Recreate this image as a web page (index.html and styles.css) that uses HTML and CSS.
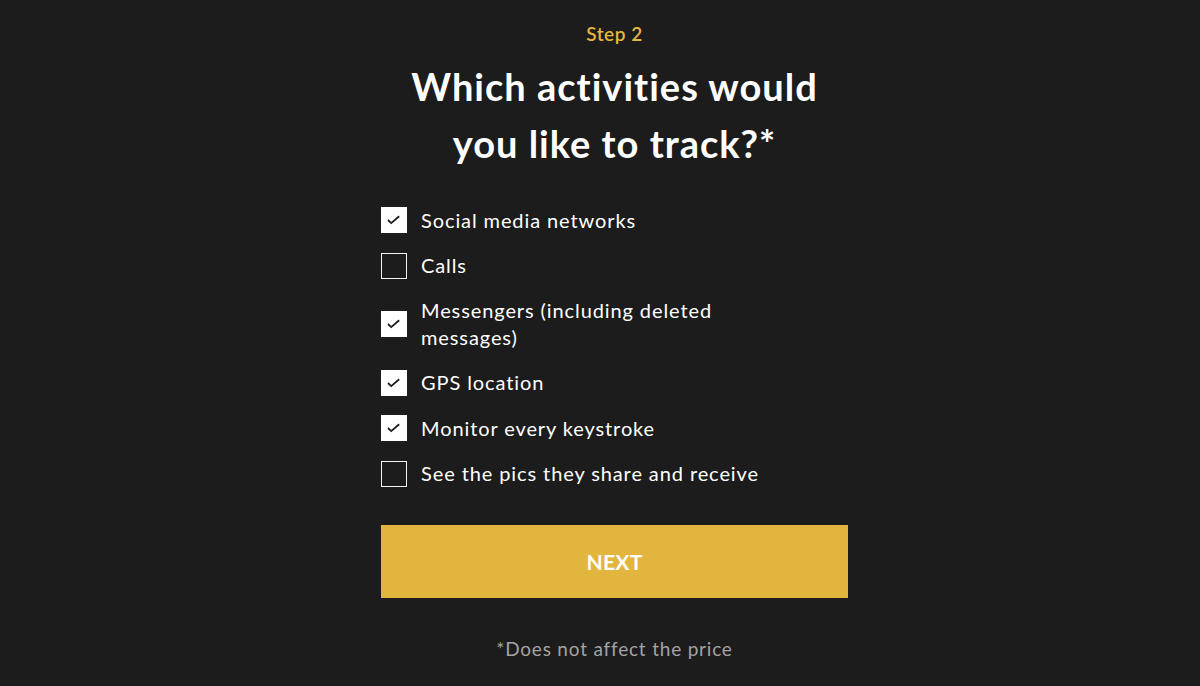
FILE: index.html
```html
<!DOCTYPE html>
<html>
<head>
<meta charset="utf-8">
<link rel="stylesheet" href="styles.css">
</head>
<body>
<main class="wrap">
  <div class="step">Step 2</div>
  <h1 class="title">Which activities would<br>you like to track?*</h1>
  <ul class="list">
    <li class="item"><span class="box checked"><svg viewBox="0 0 23 23"><path d="M6 12l3.2 3.1 8-6.8" fill="none" stroke="#1c1c1c" stroke-width="1.8"/></svg></span><span class="label">Social media networks</span></li>
    <li class="item"><span class="box"></span><span class="label">Calls</span></li>
    <li class="item"><span class="box checked"><svg viewBox="0 0 23 23"><path d="M6 12l3.2 3.1 8-6.8" fill="none" stroke="#1c1c1c" stroke-width="1.8"/></svg></span><span class="label">Messengers (including deleted messages)</span></li>
    <li class="item"><span class="box checked"><svg viewBox="0 0 23 23"><path d="M6 12l3.2 3.1 8-6.8" fill="none" stroke="#1c1c1c" stroke-width="1.8"/></svg></span><span class="label">GPS location</span></li>
    <li class="item"><span class="box checked"><svg viewBox="0 0 23 23"><path d="M6 12l3.2 3.1 8-6.8" fill="none" stroke="#1c1c1c" stroke-width="1.8"/></svg></span><span class="label">Monitor every keystroke</span></li>
    <li class="item"><span class="box"></span><span class="label">See the pics they share and receive</span></li>
  </ul>
  <button class="next">NEXT</button>
  <p class="note">*Does not affect the price</p>
</main>
</body>
</html>
```

FILE: styles.css
```css
html, body {
  margin: 0;
  padding: 0;
  background: #1c1c1c;
  height: 100%;
}
body {
  font-family: Lato, "Open Sans", sans-serif;
  color: #fff;
}
.wrap {
  width: 467px;
  margin: 0 0 0 calc(50% - 219px);
  display: flex;
  flex-direction: column;
  align-items: stretch;
  padding-top: 22px;
}
.step {
  text-align: center;
  color: #e3b63f;
  font-size: 19px;
  font-weight: 600;
  line-height: 24px;
  letter-spacing: 0.5px;
}
.title {
  margin: 12px -60px 0;
  text-align: center;
  font-size: 38px;
  font-weight: 700;
  line-height: 57px;
  letter-spacing: 1px;
}
.list {
  list-style: none;
  margin: 34px 0 0;
  padding: 0;
  display: flex;
  flex-direction: column;
  gap: 17.5px;
}
.item {
  display: flex;
  align-items: center;
  gap: 14px;
  min-height: 28px;
}
.box {
  flex: none;
  width: 26px;
  height: 26px;
  box-sizing: border-box;
  border: 1.5px solid #f2f2f2;
  display: flex;
}
.box.checked {
  background: #fff;
  border-color: #fff;
}
.box svg {
  width: 23px;
  height: 23px;
}
.label {
  font-size: 20px;
  line-height: 27px;
  max-width: 350px;
  letter-spacing: 0.9px;
}
.next {
  margin-top: 37.5px;
  height: 73px;
  border: none;
  background: #e2b53f;
  color: #fff;
  font-family: Lato, "Open Sans", sans-serif;
  font-weight: 700;
  font-size: 21px;
  letter-spacing: 0.3px;
}
.note {
  margin: 37px 0 0;
  text-align: center;
  color: #a3a3a3;
  font-size: 19px;
  line-height: 28px;
  letter-spacing: 0.8px;
}
```
